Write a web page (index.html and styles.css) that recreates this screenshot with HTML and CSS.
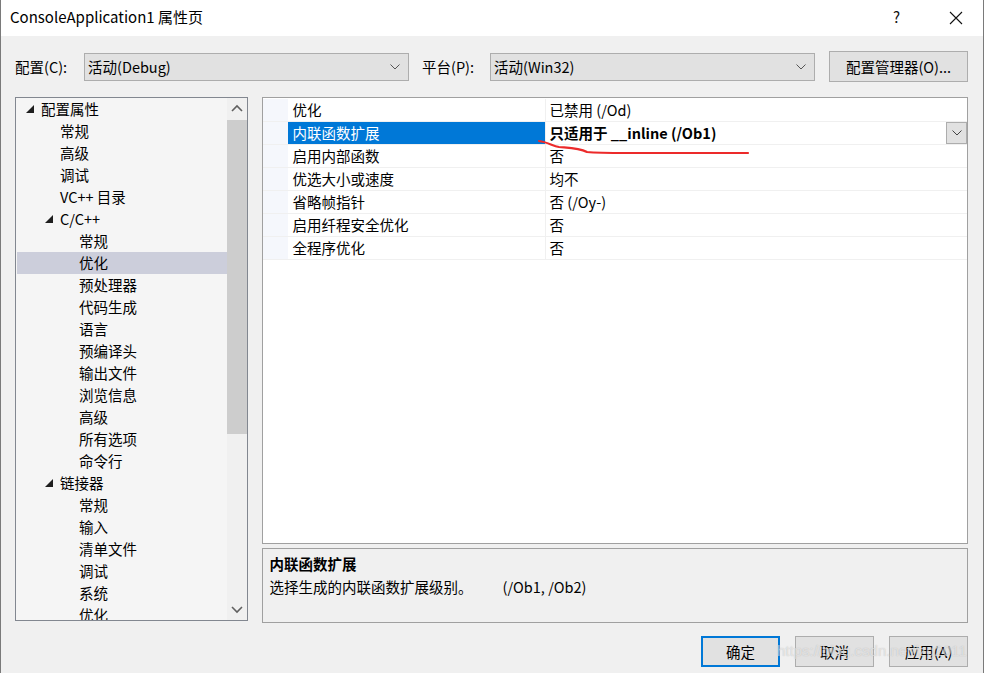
FILE: index.html
```html
<!DOCTYPE html>
<html lang="zh-CN">
<head>
    <meta charset="UTF-8">
    <title>ConsoleApplication1 属性页</title>
    <link rel="stylesheet" href="styles.css">
</head>
<body>
    <div class="window">
        <div class="titlebar">
            <span class="title">ConsoleApplication1 属性页</span>
            <span class="help">?</span>
            <svg class="close" width="14" height="14" viewBox="0 0 14 14">
                <path d="M1 1 L13 13 M13 1 L1 13" stroke="#111" stroke-width="1.1" fill="none"/>
            </svg>
        </div>

        <div class="main">
            <div class="config-row">
                <label class="config-label">配置(C):</label>
                <div class="combo combo-config">
                    <span>活动(Debug)</span>
                    <svg class="chev" width="10" height="6" viewBox="0 0 10 6"><path d="M0.5 0.5 L5 5 L9.5 0.5" stroke="#555" fill="none"/></svg>
                </div>
                <label class="config-label platform">平台(P):</label>
                <div class="combo combo-platform">
                    <span>活动(Win32)</span>
                    <svg class="chev" width="10" height="6" viewBox="0 0 10 6"><path d="M0.5 0.5 L5 5 L9.5 0.5" stroke="#555" fill="none"/></svg>
                </div>
                <button class="btn manager-btn">配置管理器(O)...</button>
            </div>

            <div class="content">
                <div class="tree">
                    <div class="tree-rows">
                        <div class="node lvl1"><i class="tri"></i>配置属性</div>
                        <div class="node lvl2">常规</div>
                        <div class="node lvl2">高级</div>
                        <div class="node lvl2">调试</div>
                        <div class="node lvl2">VC++ 目录</div>
                        <div class="node lvl2 open"><i class="tri"></i>C/C++</div>
                        <div class="node lvl3">常规</div>
                        <div class="node lvl3 selected">优化</div>
                        <div class="node lvl3">预处理器</div>
                        <div class="node lvl3">代码生成</div>
                        <div class="node lvl3">语言</div>
                        <div class="node lvl3">预编译头</div>
                        <div class="node lvl3">输出文件</div>
                        <div class="node lvl3">浏览信息</div>
                        <div class="node lvl3">高级</div>
                        <div class="node lvl3">所有选项</div>
                        <div class="node lvl3">命令行</div>
                        <div class="node lvl2 open"><i class="tri"></i>链接器</div>
                        <div class="node lvl3">常规</div>
                        <div class="node lvl3">输入</div>
                        <div class="node lvl3">清单文件</div>
                        <div class="node lvl3">调试</div>
                        <div class="node lvl3">系统</div>
                        <div class="node lvl3">优化</div>
                    </div>
                    <div class="scrollbar">
                        <svg class="arrow" width="20" height="22" viewBox="0 0 20 22"><path d="M5 13 L10 8 L15 13" stroke="#606060" stroke-width="1.6" fill="none"/></svg>
                        <div class="track"><div class="thumb"></div></div>
                        <svg class="arrow" width="20" height="22" viewBox="0 0 20 22"><path d="M5 9 L10 14 L15 9" stroke="#606060" stroke-width="1.6" fill="none"/></svg>
                    </div>
                </div>

                <div class="right">
                    <div class="grid">
                        <div class="prop"><div class="gutter"></div><div class="pname">优化</div><div class="pvalue">已禁用 (/Od)</div></div>
                        <div class="prop active"><div class="gutter"></div><div class="pname">内联函数扩展</div><div class="pvalue">只适用于 __inline (/Ob1)
                            <span class="drop"><svg width="10" height="6" viewBox="0 0 10 6"><path d="M0.5 0.5 L5 5 L9.5 0.5" stroke="#444" fill="none"/></svg></span></div></div>
                        <div class="prop"><div class="gutter"></div><div class="pname">启用内部函数</div><div class="pvalue">否</div></div>
                        <div class="prop"><div class="gutter"></div><div class="pname">优选大小或速度</div><div class="pvalue">均不</div></div>
                        <div class="prop"><div class="gutter"></div><div class="pname">省略帧指针</div><div class="pvalue">否 (/Oy-)</div></div>
                        <div class="prop"><div class="gutter"></div><div class="pname">启用纤程安全优化</div><div class="pvalue">否</div></div>
                        <div class="prop"><div class="gutter"></div><div class="pname">全程序优化</div><div class="pvalue">否</div></div>
                    </div>
                    <div class="desc">
                        <div class="desc-title">内联函数扩展</div>
                        <div class="desc-text">选择生成的内联函数扩展级别。<span class="desc-flags">(/Ob1, /Ob2)</span></div>
                    </div>
                </div>
            </div>

            <div class="footer">
                <button class="btn dlg-btn default">确定</button>
                <button class="btn dlg-btn">取消</button>
                <button class="btn dlg-btn">应用(A)</button>
            </div>
        </div>

        <!-- hand-drawn annotation on the screenshot -->
        <svg class="scribble" width="230" height="24" viewBox="0 0 230 24">
            <path d="M2 3 C 10 4, 16 8, 22 9 C 34 10, 42 10, 50 14 C 60 15, 70 15, 90 15 C 130 15, 180 15, 211 15" stroke="#ec2a2a" stroke-width="2.2" fill="none" stroke-linecap="round"/>
        </svg>
        <div class="watermark">https://blog.csdn.net/lzg2011</div>
    </div>
</body>
</html>
```

FILE: styles.css
```css
* {
    box-sizing: border-box;
}

body {
    margin: 0;
    font-family: "Noto Sans CJK SC", "Noto Sans", sans-serif;
    font-size: 14.5px;
    color: #000;
    background: #fff;
}

.window {
    position: relative;
    width: 984px;
    height: 673px;
    background: #f0f0f0;
    border-left: 1px solid #7a7a7a;
    border-right: 1px solid #7a7a7a;
    overflow: hidden;
}

.titlebar {
    display: flex;
    align-items: center;
    height: 36px;
    background: #fff;
    padding: 0 0 3px 9px;
}

.title {
    font-size: 15px;
    flex: 1;
}

.help {
    font-size: 15px;
    width: 56px;
    color: #111;
}

.close {
    margin-right: 20px;
    margin-top: 2px;
}

.main {
    padding: 0 15px 0 14px;
}

.config-row {
    display: flex;
    align-items: center;
    height: 33px;
    margin-top: 14px;
}

.config-label {
    width: 69px;
}

.config-label.platform {
    width: 68px;
    margin-left: 13px;
}

.combo {
    display: flex;
    align-items: center;
    justify-content: space-between;
    height: 28px;
    width: 325px;
    background: #e1e1e1;
    border: 1px solid #adadad;
    padding: 0 8px 0 3px;
}

.btn {
    font-family: inherit;
    font-size: 14.5px;
    color: #000;
    background: #e1e1e1;
    border: 1px solid #adadad;
    padding: 0;
}

.manager-btn {
    margin-left: 14px;
    width: 139px;
    height: 31px;
}

.content {
    display: flex;
    gap: 14px;
    margin-top: 14px;
    height: 526px;
}

.tree {
    display: flex;
    width: 233px;
    height: 524px;
    border: 1px solid #828790;
    background: #f5f5f5;
    padding-left: 1px;
}

.tree-rows {
    flex: 1;
    overflow: hidden;
}

.node {
    position: relative;
    height: 22px;
    line-height: 22px;
    white-space: nowrap;
}

.node.lvl1 {
    padding-left: 24px;
}

.node.lvl2 {
    padding-left: 43px;
}

.node.lvl3 {
    padding-left: 62px;
}

.node.selected {
    background: #cccedb;
}

.tri {
    position: absolute;
    top: 7px;
    width: 0;
    height: 0;
    border-left: 8px solid transparent;
    border-bottom: 8px solid #1e1e1e;
}

.lvl1 .tri {
    left: 9px;
}

.lvl2 .tri {
    left: 28px;
}

.scrollbar {
    display: flex;
    flex-direction: column;
    width: 20px;
    background: #f0f0f0;
}

.arrow {
    display: block;
    flex: none;
}

.track {
    flex: 1;
}

.thumb {
    height: 314px;
    background: #cdcdcd;
}

.right {
    display: flex;
    flex-direction: column;
    gap: 4px;
    width: 708px;
}

.grid {
    height: 447px;
    border: 1px solid #a0a0a0;
    background: #fff;
    padding-top: 1px;
}

.prop {
    display: flex;
    height: 23px;
    line-height: 22px;
    border-bottom: 1px solid #f0f0f0;
}

.gutter {
    width: 25px;
    background: #f5f7fc;
}

.pname {
    width: 258px;
    padding-left: 5px;
    border-right: 1px solid #f0f0f0;
}

.pvalue {
    position: relative;
    flex: 1;
    padding-left: 4px;
}

.prop.active .pname {
    background: #0078d7;
    color: #fff;
}

.prop.active .pvalue {
    font-weight: bold;
}

.drop {
    position: absolute;
    right: 0;
    top: 0;
    display: flex;
    align-items: center;
    justify-content: center;
    width: 21px;
    height: 22px;
    background: #e1e1e1;
    border: 1px solid #adadad;
}

.desc {
    height: 75px;
    border: 1px solid #a0a0a0;
    background: #f0f0f0;
    padding: 4px 7px;
}

.desc-title {
    font-weight: bold;
    line-height: 22px;
}

.desc-text {
    line-height: 24px;
}

.desc-flags {
    margin-left: 30px;
}

.footer {
    display: flex;
    justify-content: flex-end;
    gap: 15px;
    margin-top: 13px;
}

.dlg-btn {
    width: 79px;
    height: 31px;
}

.dlg-btn.default {
    border: 2px solid #0078d7;
}

.scribble {
    position: absolute;
    left: 536px;
    top: 138px;
}

.watermark {
    position: absolute;
    left: 776px;
    top: 642px;
    font-family: "Liberation Sans", sans-serif;
    font-size: 15px;
    color: rgba(255, 255, 255, 0.55);
    text-shadow: 0 0 1px rgba(120, 120, 120, 0.45);
}
```
